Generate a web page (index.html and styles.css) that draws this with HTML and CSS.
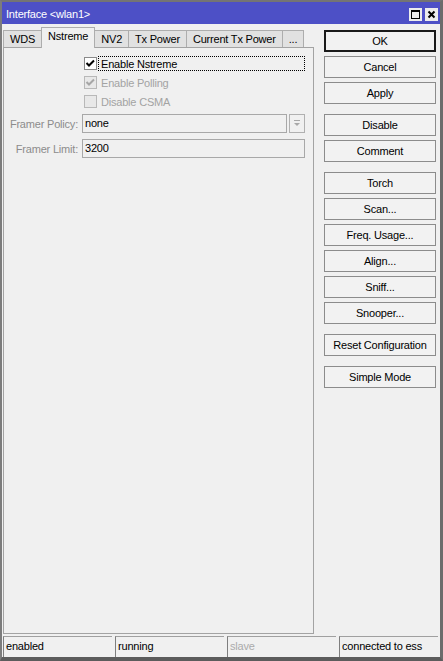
FILE: index.html
```html
<!DOCTYPE html>
<html lang="en">
<head>
  <meta charset="UTF-8" />
  <meta name="viewport" content="width=device-width, initial-scale=1.0"/>
  <title>Interface &lt;wlan1&gt;</title>
  <link rel="stylesheet" href="styles.css">
</head>
<body>
  <div class="window">
    <div class="titlebar">
      <span class="title">Interface &lt;wlan1&gt;</span>
      <div class="title-btns">
        <svg class="tbtn" width="13" height="13" viewBox="0 0 13 13">
          <rect x="0" y="0" width="13" height="13" fill="#ececec"/>
          <rect x="2.5" y="2.5" width="8" height="8" fill="none" stroke="#000" stroke-width="1"/>
          <line x1="2" y1="3.5" x2="11" y2="3.5" stroke="#000" stroke-width="1"/>
        </svg>
        <svg class="tbtn" width="13" height="13" viewBox="0 0 13 13">
          <rect x="0" y="0" width="13" height="13" fill="#ececec"/>
          <path d="M3.5 3.5 L9.5 9.5 M9.5 3.5 L3.5 9.5" stroke="#000" stroke-width="2" fill="none"/>
        </svg>
      </div>
    </div>

    <div class="body">
      <div class="main">
        <div class="tabs">
          <div class="tab">WDS</div>
          <div class="tab active">Nstreme</div>
          <div class="tab">NV2</div>
          <div class="tab">Tx Power</div>
          <div class="tab">Current Tx Power</div>
          <div class="tab">...</div>
        </div>

        <div class="panel">
          <div class="check-row">
            <span class="box">
              <svg width="11" height="11" viewBox="0 0 11 11"><polyline points="1.5,5 4,7.5 9,2.5" fill="none" stroke="#000" stroke-width="2"/></svg>
            </span>
            <span class="check-label focus">Enable Nstreme</span>
          </div>
          <div class="check-row disabled">
            <span class="box">
              <svg width="11" height="11" viewBox="0 0 11 11"><polyline points="1.5,5 4,7.5 9,2.5" fill="none" stroke="#a6a6a6" stroke-width="2"/></svg>
            </span>
            <span class="check-label">Enable Polling</span>
          </div>
          <div class="check-row disabled">
            <span class="box"></span>
            <span class="check-label">Disable CSMA</span>
          </div>

          <div class="field-row first">
            <span class="field-label">Framer Policy:</span>
            <span class="field">none</span>
            <span class="drop">
              <svg width="14" height="17" viewBox="0 0 14 17">
                <line x1="4" y1="5.5" x2="10" y2="5.5" stroke="#a8a8a8" stroke-width="1"/>
                <polygon points="4,8 10,8 7,11" fill="#a8a8a8"/>
              </svg>
            </span>
          </div>
          <div class="field-row">
            <span class="field-label">Framer Limit:</span>
            <span class="field">3200</span>
          </div>
        </div>
      </div>

      <div class="side">
        <div class="group">
          <div class="btn default">OK</div>
          <div class="btn">Cancel</div>
          <div class="btn">Apply</div>
        </div>
        <div class="group">
          <div class="btn">Disable</div>
          <div class="btn">Comment</div>
        </div>
        <div class="group">
          <div class="btn">Torch</div>
          <div class="btn">Scan...</div>
          <div class="btn">Freq. Usage...</div>
          <div class="btn">Align...</div>
          <div class="btn">Sniff...</div>
          <div class="btn">Snooper...</div>
        </div>
        <div class="group">
          <div class="btn">Reset Configuration</div>
        </div>
        <div class="group">
          <div class="btn">Simple Mode</div>
        </div>
      </div>
    </div>

    <div class="status">
      <div class="cell">enabled</div>
      <div class="cell">running</div>
      <div class="cell muted">slave</div>
      <div class="cell">connected to ess</div>
    </div>
  </div>
</body>
</html>
```

FILE: styles.css
```css
body {
  margin: 0;
  font-family: "Liberation Sans", Arial, sans-serif;
  font-size: 11px;
  letter-spacing: -0.2px;
  color: #000;
  background: #f0f0f0;
}

.window {
  width: 443px;
  height: 661px;
  box-sizing: border-box;
  display: flex;
  flex-direction: column;
  background: #f0f0f0;
  border-top: 2px solid #747474;
  border-left: 2px solid #7c7c7c;
  border-right: 3px solid #6c6c6c;
  border-bottom: 4px solid #5c5c5c;
}

.titlebar {
  height: 22px;
  flex: none;
  display: flex;
  align-items: center;
  justify-content: space-between;
  padding: 2px 2px 0 4px;
  box-sizing: border-box;
  background: #4d50c6;
  color: #fff;
}

.title-btns {
  display: flex;
  gap: 3px;
}

.tbtn { display: block; }

.body {
  flex: 1;
  display: flex;
  gap: 10px;
  padding: 0 4px 0 1px;
  min-height: 0;
}

.main {
  width: 311px;
  display: flex;
  flex-direction: column;
  padding-bottom: 2px;
}

.tabs {
  height: 23px;
  flex: none;
  display: flex;
  align-items: flex-end;
}

.tab {
  height: 16px;
  line-height: 17px;
  padding: 0 6px;
  background: #e1e1e1;
  border: 1px solid #adadad;
  border-bottom: none;
  margin-right: -1px;
}

.tab.active {
  height: 20px;
  line-height: 16px;
  background: #f0f0f0;
  margin-bottom: -1px;
  position: relative;
  z-index: 1;
}

.panel {
  flex: 1;
  border: 1px solid #a3a3a3;
  padding-top: 6px;
}

.check-row {
  display: flex;
  align-items: center;
  height: 19px;
  padding-left: 80px;
  padding-right: 8px;
}

.box {
  width: 13px;
  height: 13px;
  box-sizing: border-box;
  border: 1px solid #8a8a8a;
  background: #fff;
  display: flex;
  align-items: center;
  justify-content: center;
  flex: none;
}

.check-label {
  flex: 1;
  margin-left: 1px;
  padding: 0 2px;
  height: 15px;
  line-height: 14px;
  border: 1px solid transparent;
  box-sizing: border-box;
}

.check-label.focus { border: 1px dotted #000; }

.disabled .box {
  background: #e8e8e8;
  border-color: #b8b8b8;
}

.disabled .check-label { color: #a3a3a3; }

.field-row {
  display: flex;
  align-items: center;
  height: 19px;
  margin-top: 6px;
  padding-right: 8px;
}

.field-row.first { margin-top: 3px; }

.field-label {
  width: 74px;
  text-align: right;
  margin-right: 4px;
  color: #8c8c8c;
  flex: none;
}

.field {
  flex: 1;
  height: 19px;
  line-height: 17px;
  box-sizing: border-box;
  border: 1px solid #a8a8a8;
  padding-left: 2px;
}

.drop {
  width: 16px;
  height: 19px;
  margin-left: 2px;
  box-sizing: border-box;
  border: 1px solid #b0b0b0;
  flex: none;
}

.drop svg { display: block; }

.side {
  width: 112px;
  padding-top: 6px;
  display: flex;
  flex-direction: column;
  gap: 10px;
}

.group {
  display: flex;
  flex-direction: column;
  gap: 4px;
}

.btn {
  height: 22px;
  line-height: 20px;
  box-sizing: border-box;
  border: 1px solid #8c8c8c;
  background: #f2f2f2;
  text-align: center;
}

.btn.default {
  border: 2px solid #1a1a1a;
  line-height: 18px;
}

.status {
  height: 21px;
  flex: none;
  display: grid;
  grid-template-columns: 109px 109px 109px 1fr;
  gap: 3px;
  padding: 0 2px 0 1px;
}

.cell {
  border-top: 1px solid #a0a0a0;
  border-left: 1px solid #7e7e7e;
  padding-left: 2px;
  line-height: 19px;
  white-space: nowrap;
  overflow: hidden;
}

.cell.muted { color: #ababab; }
```
